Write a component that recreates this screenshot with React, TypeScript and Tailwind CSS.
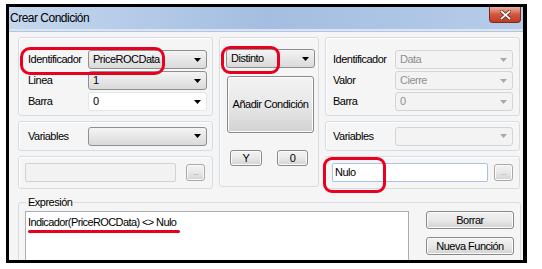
import React from "react";

type ComboKind = "button" | "edit" | "disabled";

function Arrow({ disabled }: { disabled?: boolean }) {
  return (
    <svg width="7" height="4" viewBox="0 0 7 4" className="shrink-0">
      <path d="M0 0h7L3.5 4z" fill={disabled ? "#a8a8a8" : "#000"} />
    </svg>
  );
}

function Combo({ value, kind, className }: { value?: string; kind: ComboKind; className: string }) {
  const look =
    kind === "button"
      ? "bg-gradient-to-b from-[#f4f4f4] to-[#dadada] border-[#8f8f8f] text-black"
      : kind === "edit"
      ? "bg-white border-[#e2e5e9] text-black"
      : "bg-[#f3f3f3] border-[#d4d4d4] text-[#8e8e8e]";
  return (
    <div className={`flex items-center h-[19px] border rounded-[3px] pl-[4px] pr-[5px] ${look} ${className}`}>
      <span className="flex-1 text-[11px] tracking-[-0.5px] leading-none truncate">{value}</span>
      <Arrow disabled={kind === "disabled"} />
    </div>
  );
}

function Btn({ children, className }: { children?: React.ReactNode; className: string }) {
  return (
    <div
      className={`flex items-center justify-center border border-[#8a8a8a] rounded-[3px] bg-gradient-to-b from-[#f3f3f3] via-[#e8e8e8] to-[#d2d2d2] shadow-[inset_0_0_0_1px_#fbfbfb] text-[11px] tracking-[-0.5px] leading-none text-black ${className}`}
    >
      {children}
    </div>
  );
}

const group = "border border-[#d5dde3] rounded-[3px] shadow-[inset_1px_1px_0_#ffffff]";
const label = "text-[11px] tracking-[-0.5px] leading-none text-black";

export default function App() {
  return (
    <div className="relative w-[542px] h-[269px] bg-white overflow-hidden font-['Liberation_Sans',Arial,sans-serif]">
      <div className="ml-[6px] mt-[4px] w-[521px] h-[259px] border-[3px] border-r-4 border-black flex flex-col overflow-hidden">
        {/* Title bar */}
        <div className="h-[22px] shrink-0 flex items-start bg-gradient-to-r from-[#c4d7ee] via-[#a4bee1] to-[#b6cce9]">
          <span className="ml-px mt-[5px] text-[12px] tracking-[-0.5px] leading-none text-black">Crear Condición</span>
          <div className="ml-auto mr-[2px] w-[32px] h-[16px] flex items-center justify-center rounded-b-[4px] border border-t-0 border-[#7a2d22] bg-gradient-to-b from-[#eab0a2] via-[#d2573f] to-[#c33a22]">
            <svg width="11" height="10" viewBox="0 0 11 10">
              <path d="M1.5 1.5l8 7M9.5 1.5l-8 7" stroke="#5a2019" strokeWidth="3.2" strokeLinecap="square" />
              <path d="M1.5 1.5l8 7M9.5 1.5l-8 7" stroke="#ffffff" strokeWidth="1.8" strokeLinecap="square" />
            </svg>
          </div>
        </div>
        <div className="h-[3px] shrink-0 bg-[#d9e5f3] border-b border-[#b5c6dc]" />

        {/* Client area */}
        <div className="flex-1 bg-[#f5f5f5] overflow-hidden pl-[9px] pt-[5px]">
          <div className="flex gap-[6px]">
            {/* Left column */}
            <div className="w-[195px] flex flex-col gap-[5px]">
              <div className={`${group} h-[79px] pl-[9px] pt-[12px] flex flex-col gap-[2px]`}>
                <div className="flex items-center">
                  <span className={`${label} w-[60px]`}>Identificador</span>
                  <Combo kind="button" value="PriceROCData" className="w-[119px]" />
                </div>
                <div className="flex items-center">
                  <span className={`${label} w-[60px]`}>Linea</span>
                  <Combo kind="button" value="1" className="w-[119px]" />
                </div>
                <div className="flex items-center">
                  <span className={`${label} w-[60px]`}>Barra</span>
                  <Combo kind="edit" value="0" className="w-[119px]" />
                </div>
              </div>
              <div className={`${group} h-[30px] pl-[9px] flex items-center`}>
                <span className={`${label} w-[60px]`}>Variables</span>
                <Combo kind="button" className="w-[119px]" />
              </div>
              <div className={`${group} h-[33px] pl-[6px] flex items-center gap-[10px]`}>
                <div className="w-[151px] h-[19px] border border-[#d0d3d6] rounded-[2px] bg-[#f2f2f2]" />
                <Btn className="w-[19px] h-[17px] !text-[8px] !text-[#9a9a9a] !border-[#a8a8a8]">...</Btn>
              </div>
            </div>

            {/* Middle column */}
            <div className={`${group} w-[100px] h-[150px] pl-[6px] pt-[11px] flex flex-col`}>
              <Combo kind="button" value="Distinto" className="w-[89px]" />
              <Btn className="mt-[8px] ml-px w-[87px] h-[57px]">Añadir Condición</Btn>
              <div className="mt-[17px] pl-[4px] flex gap-[15px]">
                <Btn className="w-[32px] h-[16px]">Y</Btn>
                <Btn className="w-[31px] h-[16px]">0</Btn>
              </div>
            </div>

            {/* Right column */}
            <div className="w-[195px] flex flex-col gap-[5px]">
              <div className={`${group} h-[79px] pl-[7px] pt-[12px] flex flex-col gap-[2px]`}>
                <div className="flex items-center">
                  <span className={`${label} w-[62px]`}>Identificador</span>
                  <Combo kind="disabled" value="Data" className="w-[118px]" />
                </div>
                <div className="flex items-center">
                  <span className={`${label} w-[62px]`}>Valor</span>
                  <Combo kind="disabled" value="Cierre" className="w-[118px]" />
                </div>
                <div className="flex items-center">
                  <span className={`${label} w-[62px]`}>Barra</span>
                  <Combo kind="disabled" value="0" className="w-[118px]" />
                </div>
              </div>
              <div className={`${group} h-[30px] pl-[7px] flex items-center`}>
                <span className={`${label} w-[62px]`}>Variables</span>
                <Combo kind="disabled" className="w-[118px]" />
              </div>
              <div className={`${group} h-[33px] pl-[6px] flex items-center gap-[6px]`}>
                <div className="w-[156px] h-[19px] border border-[#a9c4e0] rounded-[2px] bg-white flex items-center pl-[2px]">
                  <span className={label}>Nulo</span>
                </div>
                <Btn className="w-[19px] h-[17px] !text-[8px] !text-[#9a9a9a] !border-[#a8a8a8]">...</Btn>
              </div>
            </div>
          </div>

          {/* Expression */}
          <fieldset className="mt-[8px] w-[502px] h-[80px] border border-[#d5dde3] rounded-[3px] px-[6px]">
            <legend className={`${label} ml-px px-[2px] leading-[13px]`}>Expresión</legend>
            <div className="mt-[3px] flex gap-[17px]">
              <div className="w-[384px] h-[60px] bg-white border border-[#abadb3] pl-[2px] pt-[4px] text-[11px] leading-[13px]">
                <span className="tracking-[-0.6px] text-black">Indicador(PriceROCData) &lt;&gt; Nulo</span>
              </div>
              <div className="flex flex-col gap-[8px]">
                <Btn className="w-[88px] h-[18px]">Borrar</Btn>
                <Btn className="w-[88px] h-[18px]">Nueva Función</Btn>
              </div>
            </div>
          </fieldset>
        </div>
      </div>

      {/* Red highlight marks */}
      <div className="absolute left-[20px] top-[47px] w-[145px] h-[28px] border-[3px] border-[#e8001f] rounded-[10px]" />
      <div className="absolute left-[221px] top-[46px] w-[59px] h-[28px] border-[3px] border-[#e8001f] rounded-[9px]" />
      <div className="absolute left-[323px] top-[157px] w-[63px] h-[36px] border-[3px] border-[#e8001f] rounded-[9px]" />
      <div className="absolute left-[28px] top-[230px] w-[152px] h-[3px] bg-[#e8001f] rounded-full" />
    </div>
  );
}
